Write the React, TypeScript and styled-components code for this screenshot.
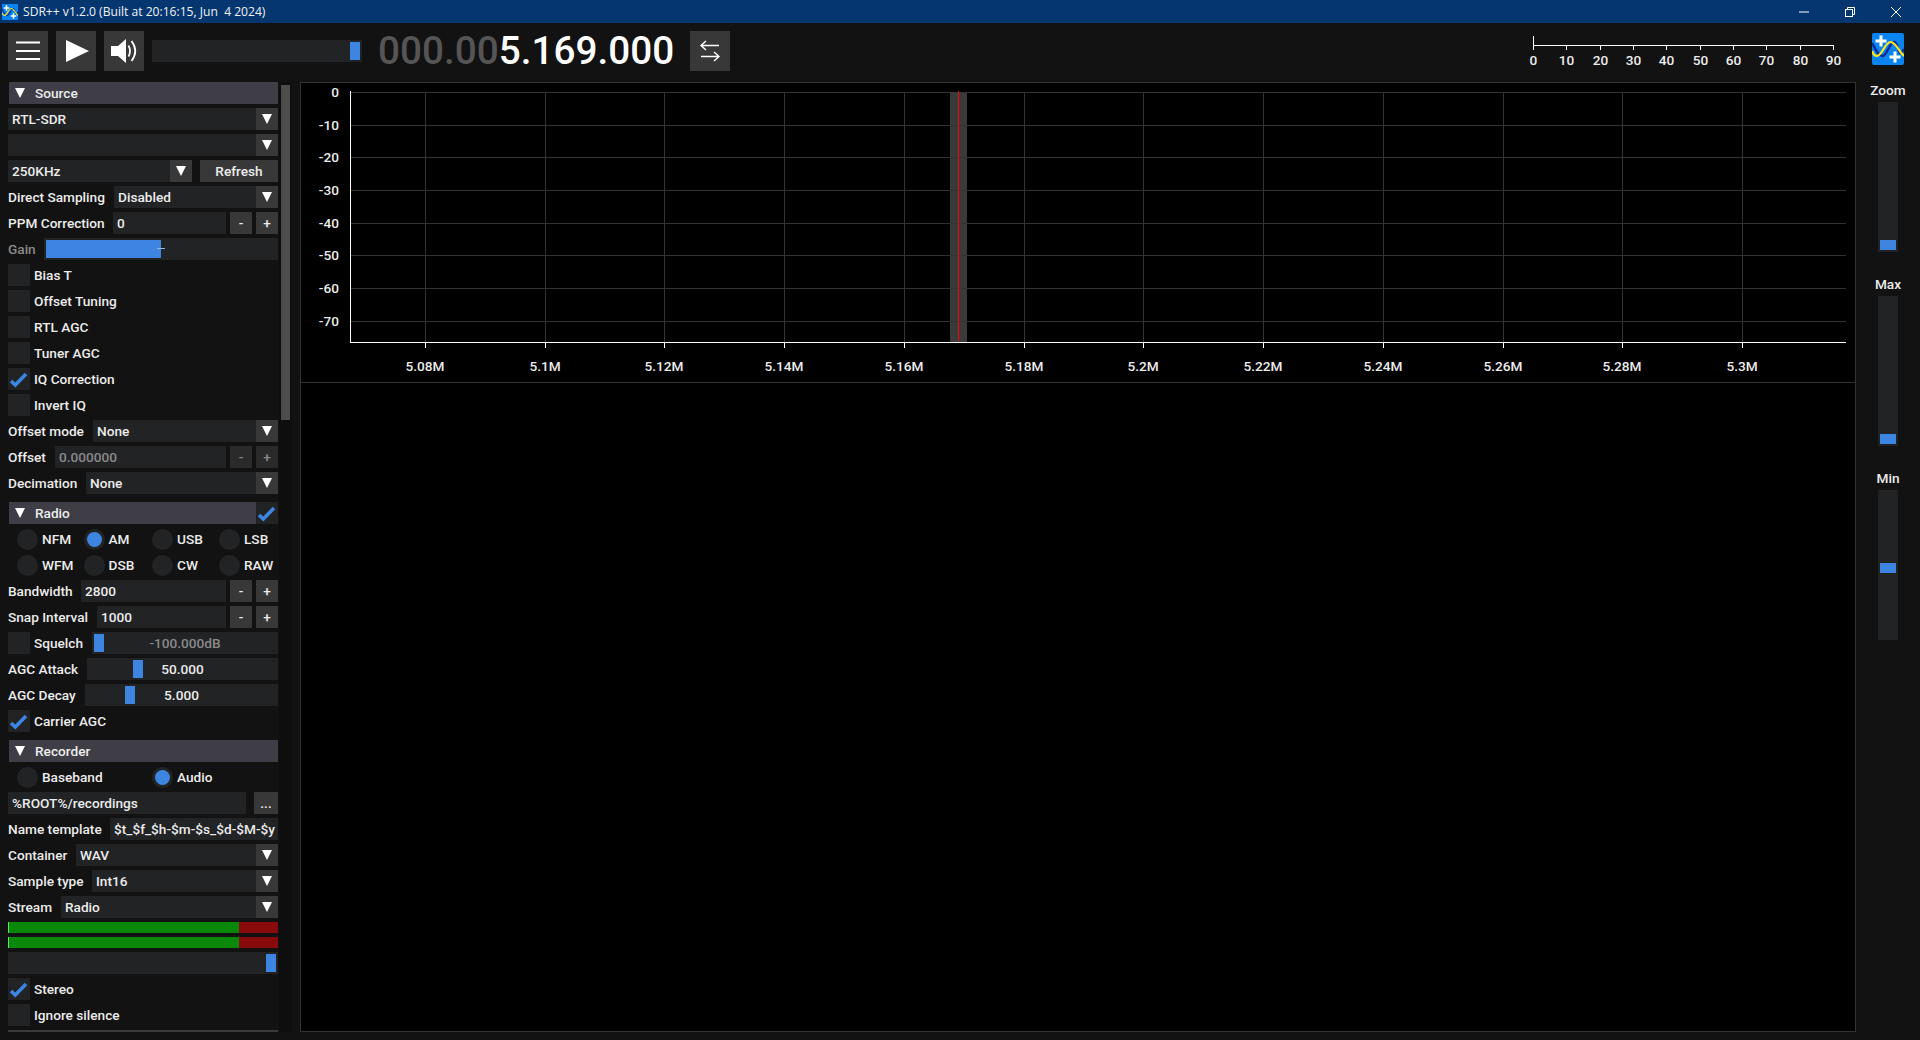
import React from "react";
import styled, { createGlobalStyle } from "styled-components";

const Global = createGlobalStyle`
  html, body { margin: 0; padding: 0; background: #121212; }
  #root { width: 1920px; height: 1040px; overflow: hidden; }
  * { box-sizing: border-box; }
`;

const Page = styled.div`
  width: 1920px; height: 1040px; display: flex; flex-direction: column;
  background: #121212; color: #ececec;
  font-family: Roboto, "Liberation Sans", sans-serif; font-size: 13.65px; font-weight: 500;
`;
const TitleBar = styled.div`
  height: 23px; flex: none; display: flex; align-items: center; background: #05366f; padding: 0 1px 0 2px;
`;
const TitleText = styled.span`
  margin-left: 5px; color: #f2f2f2; font: 400 12.1px "Open Sans", "Noto Sans", sans-serif; white-space: pre; flex: 1;
`;
const WinBtn = styled.div`
  width: 46px; height: 23px; display: flex; align-items: center; justify-content: center;
`;
const Toolbar = styled.div`
  height: 59px; flex: none; display: flex; align-items: flex-start; padding: 8px 16px 0 8px; gap: 8px;
`;
const ToolBtn = styled.div`
  width: 40px; height: 40px; flex: none; background: #383838; display: flex; align-items: center; justify-content: center;
`;
const VolumeTrack = styled.div`
  position: relative; width: 210px; height: 22px; margin-top: 9px; background: #222325; flex: none;
`;
const Freq = styled.div`
  width: 304px; height: 40px; margin-left: 8px; flex: none; font: 500 38.7px/40px Roboto, sans-serif; color: #fff; white-space: pre;
`;
const FreqDim = styled.span`color: #555;`;
const Snr = styled.svg`
  width: 320px; height: 59px; margin: -8px 0 0 auto; flex: none;
  font-family: Roboto, sans-serif; font-size: 13.65px; font-weight: 500;
`;
const LogoWrap = styled.div`
  margin: 2px 0 0 19px; width: 32px; height: 32px; flex: none;
`;
const Body = styled.div`
  flex: 1; min-height: 0; display: flex; padding: 0 0 8px 8px;
`;
const Menu = styled.div`
  width: 270px; flex: none; display: flex; flex-direction: column; gap: 4px; overflow: hidden;
`;
const ScrollTrack = styled.div`
  width: 13px; margin: 0 8px 0 1px; flex: none; background: #0e0e0e; padding: 3px 2px;
`;
const ScrollThumb = styled.div`
  height: 335px; background: #4d4d4d;
`;
const Header = styled.div<{ $gap?: boolean }>`
  height: 22px; flex: none; display: flex; align-items: center; margin-top: ${p => (p.$gap ? 4 : 0)}px;
`;
const HeaderBar = styled.div`
  flex: 1; height: 22px; margin-left: 1px; background: #3f3e46; display: flex; align-items: center; padding-left: 6px; gap: 10px;
`;
const Tri = styled.span`
  width: 0; height: 0; flex: none;
  border-left: 5.5px solid transparent; border-right: 5.5px solid transparent; border-top: 10px solid #fff;
`;
const Row = styled.div`
  height: 22px; flex: none; display: flex; align-items: center;
`;
const Label = styled.span<{ $start: number; $dim?: boolean }>`
  width: ${p => p.$start - 8}px; flex: none; white-space: nowrap; color: ${p => (p.$dim ? "#8a8a8a" : "inherit")};
`;
const Frame = styled.div<{ $dim?: boolean }>`
  position: relative; flex: 1; min-width: 0; height: 22px; background: #222325; padding: 0 4px;
  display: flex; align-items: center; white-space: nowrap; overflow: hidden;
  color: ${p => (p.$dim ? "#8a8a8a" : "inherit")};
`;
const ArrowBox = styled.div`
  width: 22px; height: 22px; flex: none; background: #383838; display: flex; align-items: center; justify-content: center;
`;
const ComboBox = styled.div`
  flex: 1; min-width: 0; display: flex;
`;
const SmallBtn = styled.div<{ $w?: number; $ml?: number; $dim?: boolean }>`
  width: ${p => p.$w ?? 22}px; height: 22px; flex: none; margin-left: ${p => p.$ml ?? 4}px;
  background: ${p => (p.$dim ? "#2a2a2a" : "#383838")}; color: ${p => (p.$dim ? "#8a8a8a" : "inherit")};
  display: flex; align-items: center; justify-content: center;
`;
const Thumb = styled.div`
  position: absolute; top: 2px; width: 10px; height: 18px; background: #3d85e0;
`;
const SliderValue = styled.span<{ $dim?: boolean }>`
  flex: 1; text-align: center; color: ${p => (p.$dim ? "#8a8a8a" : "inherit")};
`;
const GainFill = styled.div`
  position: absolute; left: 2px; top: 2px; height: 18px; width: 115px; background: #3d85e0;
`;
const GainTick = styled.div`
  position: absolute; left: 113px; top: 10px; width: 8px; height: 1px; background: #8fb6ea;
`;
const CheckBox = styled.div`
  width: 22px; height: 22px; flex: none; background: #222325;
`;
const CheckLabel = styled.span<{ $w?: number }>`
  margin-left: 4px; white-space: nowrap; ${p => (p.$w ? `width: ${p.$w}px; flex: none;` : "")}
`;
const RadioGrid = styled.div<{ $cols: string }>`
  display: grid; grid-template-columns: ${p => p.$cols}; row-gap: 4px;
`;
const RadioCell = styled.div`
  height: 22px; display: flex; align-items: center; padding-left: 9px; gap: 4px;
`;
const RadioOuter = styled.div`
  width: 21px; height: 21px; border-radius: 50%; background: #222325; flex: none;
  display: flex; align-items: center; justify-content: center;
`;
const RadioDot = styled.div`
  width: 15px; height: 15px; border-radius: 50%; background: #3d85e0;
`;
const Meter = styled.div`
  height: 11px; flex: none; display: flex;
`;
const MeterPeak = styled.div`width: 1px; background: #66e066;`;
const MeterGreen = styled.div`width: 230px; background: #0a880a;`;
const MeterRed = styled.div`flex: 1; background: #880a0a;`;
const MeterStack = styled.div`
  display: flex; flex-direction: column; gap: 4px;
`;
const Rule = styled.div`
  height: 2px; flex: none; background: #3a3a3a;
`;
const Main = styled.div`
  width: 1556px; flex: none; border: 1px solid #333; background: #000; display: flex; flex-direction: column;
`;
const PlotSvg = styled.svg`
  width: 1554px; height: 299px; flex: none; display: block;
  font-family: Roboto, sans-serif; font-size: 13.65px; font-weight: 500;
`;
const Waterfall = styled.div`
  flex: 1; border-top: 1px solid #333; background: #000;
`;
const Side = styled.div`
  flex: 1; display: flex; flex-direction: column; align-items: center; gap: 24px;
`;
const SideGroup = styled.div`
  display: flex; flex-direction: column; align-items: center; gap: 4px;
`;
const SideLabel = styled.div`
  height: 16px; line-height: 16px;
`;
const VTrack = styled.div`
  position: relative; width: 20px; height: 150px; background: #222325;
`;
const VThumb = styled.div`
  position: absolute; left: 2px; width: 16px; height: 10px; background: #3d85e0;
`;

const Logo = ({ size }: { size: number }) => (
  <svg width={size} height={size} viewBox="0 0 32 32" style={{ display: "block", flex: "none" }}>
    <rect width="32" height="32" rx="2" fill="#0a84f0" />
    <path d="M0 10 C3 15 6 23 10.5 23 C15 23 17.5 9 22 9 C26 9 26 19 28 20 C30 20 31 18 32 16" fill="none" stroke="#0a2a9a" strokeWidth="2.4" />
    <path d="M0 18 C1.5 22 3 23 5 23 C10 23 13 9 18.5 9 C24 9 27 19 32 23" fill="none" stroke="#ffe81a" strokeWidth="2.2" />
    <path d="M3.5 8 H14.5 M9 2.5 V13.5 M17.5 24 H28.5 M23 18.5 V29.5" stroke="#fff" strokeWidth="3" fill="none" />
  </svg>
);

const Check = () => (
  <svg width="22" height="22" viewBox="0 0 22 22" style={{ display: "block" }}>
    <path d="M3 13 L7.3 17 L18 6" fill="none" stroke="#3d85e0" strokeWidth="3.6" />
  </svg>
);

const Combo = ({ value }: { value?: string }) => (
  <ComboBox>
    <Frame>{value}</Frame>
    <ArrowBox><Tri /></ArrowBox>
  </ComboBox>
);

const LabeledCombo = ({ label, start, value }: { label: string; start: number; value: string }) => (
  <Row><Label $start={start}>{label}</Label><Combo value={value} /></Row>
);

const NumberInput = ({ label, start, value, dim }: { label: string; start: number; value: string; dim?: boolean }) => (
  <Row>
    <Label $start={start}>{label}</Label>
    <Frame $dim={dim}>{value}</Frame>
    <SmallBtn $dim={dim}>-</SmallBtn>
    <SmallBtn $dim={dim}>+</SmallBtn>
  </Row>
);

const Checkbox = ({ label, on }: { label: string; on?: boolean }) => (
  <Row><CheckBox>{on && <Check />}</CheckBox><CheckLabel>{label}</CheckLabel></Row>
);

const Radio = ({ label, on }: { label: string; on?: boolean }) => (
  <RadioCell><RadioOuter>{on && <RadioDot />}</RadioOuter>{label}</RadioCell>
);

const ValueSlider = ({ thumb, value, dim }: { thumb: number; value: string; dim?: boolean }) => (
  <Frame>
    <Thumb style={{ left: thumb }} />
    <SliderValue $dim={dim}>{value}</SliderValue>
  </Frame>
);

const SectionHeader = ({ title, gap, check }: { title: string; gap?: boolean; check?: boolean }) => (
  <Header $gap={gap}>
    <HeaderBar><Tri />{title}</HeaderBar>
    {check && <CheckBox><Check /></CheckBox>}
  </Header>
);

const MeterBar = () => (
  <Meter><MeterPeak /><MeterGreen /><MeterRed /></Meter>
);

const gridY = [92, 125, 157, 190, 223, 255, 288, 321];
const dbLabels = ["0", "-10", "-20", "-30", "-40", "-50", "-60", "-70"];
const freqLabels = ["5.08M", "5.1M", "5.12M", "5.14M", "5.16M", "5.18M", "5.2M", "5.22M", "5.24M", "5.26M", "5.28M", "5.3M"];
const freqX = freqLabels.map((_, i) => Math.round(425 + i * 119.73) + 0.5);

const Plot = () => (
  <PlotSvg viewBox="301 83 1554 299">
    <rect x="950" y="92" width="17" height="250" fill="#3a3a3a" />
    {gridY.map(y => <line key={y} x1="350" x2="1846" y1={y + 0.5} y2={y + 0.5} stroke="#333" />)}
    {freqX.map(x => <line key={x} x1={x} x2={x} y1="92" y2="342" stroke="#333" />)}
    <line x1="958.5" x2="958.5" y1="91" y2="341" stroke="#f00" />
    <line x1="350.5" x2="350.5" y1="91" y2="343" stroke="#fff" />
    <line x1="350" x2="1846" y1="342.5" y2="342.5" stroke="#fff" />
    {freqX.map(x => <line key={x} x1={x} x2={x} y1="342" y2="348" stroke="#fff" />)}
    {gridY.map((y, i) => (
      <text key={y} x="339" y={y + 5} textAnchor="end" fill="#ececec">{dbLabels[i]}</text>
    ))}
    {freqLabels.map((t, i) => (
      <text key={t} x={freqX[i] - 0.5} y="371" textAnchor="middle" fill="#ececec">{t}</text>
    ))}
  </PlotSvg>
);

const snrTicks = [0, 10, 20, 30, 40, 50, 60, 70, 80, 90];

const SnrMeter = () => (
  <Snr viewBox="1525 23 320 59">
    <line x1="1533.5" x2="1533.5" y1="36" y2="50" stroke="#fff" />
    <line x1="1533" x2="1834" y1="45.5" y2="45.5" stroke="#fff" />
    {snrTicks.map(t => {
      const x = Math.round(1533 + (t * 300) / 90) + 0.5;
      return (
        <g key={t}>
          <line x1={x} x2={x} y1="45" y2="50" stroke="#fff" />
          <text x={x} y="65" textAnchor="middle" fill="#ececec">{t}</text>
        </g>
      );
    })}
  </Snr>
);

export default function App() {
  return (
    <Page>
      <Global />
      <TitleBar>
        <Logo size={16} />
        <TitleText>{"SDR++ v1.2.0 (Built at 20:16:15, Jun  4 2024)"}</TitleText>
        <WinBtn>
          <svg width="10" height="10" viewBox="0 0 10 10"><path d="M0 5 H10" stroke="#fff" /></svg>
        </WinBtn>
        <WinBtn>
          <svg width="10" height="10" viewBox="0 0 10 10" fill="none" stroke="#fff">
            <rect x="0.5" y="2.5" width="7" height="7" /><path d="M2.5 2.5 V0.5 H9.5 V7.5 H7.5" />
          </svg>
        </WinBtn>
        <WinBtn>
          <svg width="10" height="10" viewBox="0 0 10 10"><path d="M0 0 L10 10 M10 0 L0 10" stroke="#fff" /></svg>
        </WinBtn>
      </TitleBar>

      <Toolbar>
        <ToolBtn>
          <svg width="40" height="40" viewBox="0 0 40 40"><path d="M8 11.5 H32 M8 20 H32 M8 28 H32" stroke="#fff" strokeWidth="2" /></svg>
        </ToolBtn>
        <ToolBtn>
          <svg width="40" height="40" viewBox="0 0 40 40"><path d="M10 9 L33 20 L10 31 Z" fill="#fff" /></svg>
        </ToolBtn>
        <ToolBtn>
          <svg width="40" height="40" viewBox="0 0 40 40" fill="none">
            <path d="M7 15 H14 L22 8 V32 L14 25 H7 Z" fill="#fff" />
            <path d="M24.5 14.5 Q27.5 20 24.5 25.5" stroke="#fff" strokeWidth="1.8" />
            <path d="M27.5 10 Q35 20 27.5 30" stroke="#fff" strokeWidth="1.8" />
          </svg>
        </ToolBtn>
        <VolumeTrack><Thumb style={{ left: 198 }} /></VolumeTrack>
        <Freq><FreqDim>000.00</FreqDim>5.169.000</Freq>
        <ToolBtn>
          <svg width="40" height="40" viewBox="0 0 40 40" fill="none" stroke="#fff" strokeWidth="1.4">
            <path d="M29 14.5 H11 M16 10 L11 14.5 L16 19" />
            <path d="M11 25.5 H29 M24 21 L29 25.5 L24 30" />
          </svg>
        </ToolBtn>
        <SnrMeter />
        <LogoWrap><Logo size={32} /></LogoWrap>
      </Toolbar>

      <Body>
        <Menu>
          <SectionHeader title="Source" />
          <Row><Combo value="RTL-SDR" /></Row>
          <Row><Combo /></Row>
          <Row>
            <Combo value="250KHz" />
            <SmallBtn $w={78} $ml={8}>Refresh</SmallBtn>
          </Row>
          <LabeledCombo label="Direct Sampling" start={114} value="Disabled" />
          <NumberInput label="PPM Correction" start={113} value="0" />
          <Row>
            <Label $start={44} $dim>Gain</Label>
            <Frame><GainFill /><GainTick /></Frame>
          </Row>
          <Checkbox label="Bias T" />
          <Checkbox label="Offset Tuning" />
          <Checkbox label="RTL AGC" />
          <Checkbox label="Tuner AGC" />
          <Checkbox label="IQ Correction" on />
          <Checkbox label="Invert IQ" />
          <LabeledCombo label="Offset mode" start={93} value="None" />
          <NumberInput label="Offset" start={55} value="0.000000" dim />
          <LabeledCombo label="Decimation" start={86} value="None" />

          <SectionHeader title="Radio" gap check />
          <RadioGrid $cols="66.5px 68.5px 67px 68px">
            <Radio label="NFM" />
            <Radio label="AM" on />
            <Radio label="USB" />
            <Radio label="LSB" />
            <Radio label="WFM" />
            <Radio label="DSB" />
            <Radio label="CW" />
            <Radio label="RAW" />
          </RadioGrid>
          <NumberInput label="Bandwidth" start={81} value="2800" />
          <NumberInput label="Snap Interval" start={97} value="1000" />
          <Row>
            <CheckBox />
            <CheckLabel $w={58}>Squelch</CheckLabel>
            <ValueSlider thumb={2} value="-100.000dB" dim />
          </Row>
          <Row><Label $start={87}>AGC Attack</Label><ValueSlider thumb={46} value="50.000" /></Row>
          <Row><Label $start={85}>AGC Decay</Label><ValueSlider thumb={40} value="5.000" /></Row>
          <Checkbox label="Carrier AGC" on />

          <SectionHeader title="Recorder" gap />
          <RadioGrid $cols="135px 135px">
            <Radio label="Baseband" />
            <Radio label="Audio" on />
          </RadioGrid>
          <Row>
            <Frame>%ROOT%/recordings</Frame>
            <SmallBtn $w={24} $ml={8}>...</SmallBtn>
          </Row>
          <Row><Label $start={110}>Name template</Label><Frame>$t_$f_$h-$m-$s_$d-$M-$y</Frame></Row>
          <LabeledCombo label="Container" start={76} value="WAV" />
          <LabeledCombo label="Sample type" start={92} value="Int16" />
          <LabeledCombo label="Stream" start={61} value="Radio" />
          <MeterStack><MeterBar /><MeterBar /></MeterStack>
          <Row><Frame><Thumb style={{ left: 258 }} /></Frame></Row>
          <Checkbox label="Stereo" on />
          <Checkbox label="Ignore silence" />
          <Rule />
        </Menu>
        <ScrollTrack><ScrollThumb /></ScrollTrack>
        <Main>
          <Plot />
          <Waterfall />
        </Main>
        <Side>
          <SideGroup><SideLabel>Zoom</SideLabel><VTrack><VThumb style={{ top: 138 }} /></VTrack></SideGroup>
          <SideGroup><SideLabel>Max</SideLabel><VTrack><VThumb style={{ top: 138 }} /></VTrack></SideGroup>
          <SideGroup><SideLabel>Min</SideLabel><VTrack><VThumb style={{ top: 73 }} /></VTrack></SideGroup>
        </Side>
      </Body>
    </Page>
  );
}
